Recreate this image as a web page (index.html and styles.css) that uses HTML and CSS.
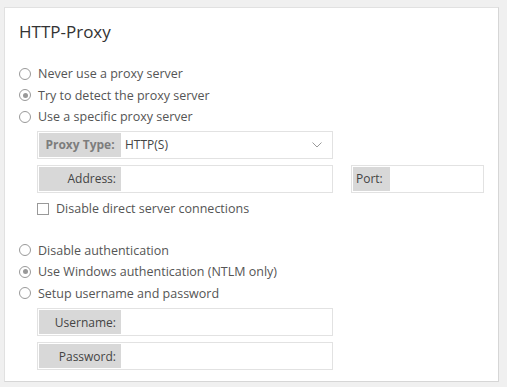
FILE: index.html
```html
<!DOCTYPE html>
<html lang="en">
<head>
  <meta charset="UTF-8">
  <title>HTTP-Proxy</title>
  <link rel="stylesheet" href="styles.css">
</head>
<body>

  <div class="panel">
    <h2>HTTP-Proxy</h2>

    <div class="option"><span class="radio"></span>Never use a proxy server</div>
    <div class="option"><span class="radio checked"></span>Try to detect the proxy server</div>
    <div class="option"><span class="radio"></span>Use a specific proxy server</div>

    <div class="sub">
      <div class="field">
        <span class="lbl bold">Proxy Type:</span>
        <span class="value">HTTP(S)</span>
        <svg class="chevron" width="10" height="6" viewBox="0 0 10 6">
          <path d="M0.5 0.5 L5 5 L9.5 0.5" fill="none" stroke="#9a9a9a" stroke-width="1"/>
        </svg>
      </div>
      <div class="field-row">
        <div class="field">
          <span class="lbl">Address:</span>
        </div>
        <div class="field port">
          <span class="lbl">Port:</span>
        </div>
      </div>
      <div class="check-row"><span class="checkbox"></span>Disable direct server connections</div>
    </div>

    <div class="auth">
      <div class="option"><span class="radio"></span>Disable authentication</div>
      <div class="option"><span class="radio checked"></span>Use Windows authentication (NTLM only)</div>
      <div class="option"><span class="radio"></span>Setup username and password</div>
    </div>

    <div class="sub creds">
      <div class="field">
        <span class="lbl">Username:</span>
      </div>
      <div class="field">
        <span class="lbl">Password:</span>
      </div>
    </div>
  </div>

</body>
</html>
```

FILE: styles.css
```css
body {
  margin: 0;
  background: #f0f0f0;
  font-family: 'Open Sans', 'Noto Sans', sans-serif;
  color: #555;
}

.panel {
  margin: 7px 8px 0 4px;
  height: 375px;
  box-sizing: border-box;
  background: #fff;
  border: 1px solid #e1e1e1;
  border-right-color: #d6d6d6;
  border-bottom-color: #d6d6d6;
  padding: 12px 14px 0 14px;
}

h2 {
  margin: 0 0 19px;
  font-size: 17px;
  font-weight: normal;
  line-height: 24px;
  color: #333;
}

.option {
  display: flex;
  align-items: center;
  height: 21.5px;
  font-size: 12.5px;
}

.radio {
  width: 10px;
  height: 10px;
  border: 1px solid #999;
  border-radius: 50%;
  margin-right: 7px;
  position: relative;
  flex-shrink: 0;
}

.radio.checked::after {
  content: "";
  position: absolute;
  left: 2.5px;
  top: 2.5px;
  width: 5px;
  height: 5px;
  border-radius: 50%;
  background: #999;
}

.sub {
  margin: 3px 0 0 18px;
}

.field {
  display: flex;
  align-items: center;
  width: 296px;
  height: 28px;
  box-sizing: border-box;
  border: 1px solid #e2e2e2;
  padding: 1px;
  font-size: 12px;
}

.lbl {
  width: 82px;
  height: 100%;
  background: #d8d8d8;
  color: #444;
  display: flex;
  align-items: center;
  justify-content: flex-end;
  padding-right: 5px;
  box-sizing: border-box;
  flex-shrink: 0;
}

.lbl.bold {
  font-weight: bold;
  color: #7d7d7d;
  justify-content: center;
  padding-right: 0;
}

.value {
  margin-left: 4px;
  color: #444;
  flex: 1;
}

.chevron {
  margin-right: 9px;
}

.field-row {
  display: flex;
  gap: 18px;
  margin-top: 6px;
}

.field.port {
  width: 133px;
}

.field.port .lbl {
  width: 37px;
  justify-content: flex-start;
  padding: 0 0 0 3px;
}

.check-row {
  display: flex;
  align-items: center;
  height: 20px;
  margin-top: 6px;
  font-size: 12.5px;
}

.checkbox {
  width: 10px;
  height: 10px;
  border: 1px solid #999;
  margin-right: 7px;
}

.auth {
  margin-top: 21px;
}

.creds {
  margin-top: 4px;
}

.creds .field + .field {
  margin-top: 6px;
}
```
